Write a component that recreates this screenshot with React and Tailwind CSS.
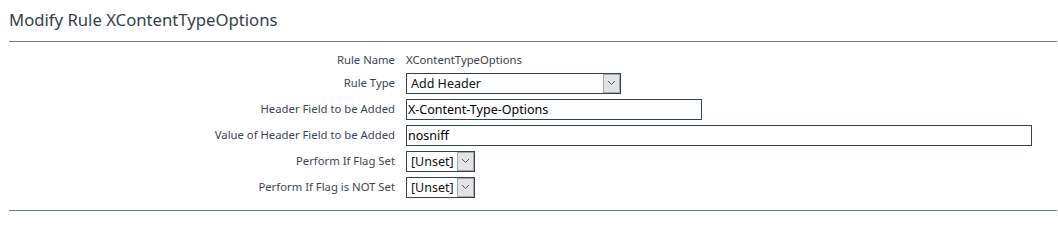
import React from 'react'

const Chevron = () => (
  <svg width="9" height="6" viewBox="0 0 9 6" fill="none">
    <path d="M1 1l3.5 3.5L8 1" stroke="#555" strokeWidth="1" />
  </svg>
)

const FakeSelect = ({ value, width }) => (
  <div className={`flex h-[21px] border border-[#2f4256] bg-white ${width}`}>
    <div className="flex-1 pl-[4px] text-[12.5px] leading-[19px] text-[#111] whitespace-nowrap overflow-hidden">{value}</div>
    <div className="flex w-[17px] items-center justify-center border border-[#a9a9a9] bg-[#e3e3e3]">
      <Chevron />
    </div>
  </div>
)

const TextBox = ({ value, width }) => (
  <div className={`h-[21px] border border-[#2f4256] bg-white pl-[1px] text-[12.5px] leading-[19px] text-black ${width}`}>
    {value}
  </div>
)

const Row = ({ label, children, height = 'h-[26px]' }) => (
  <div className={`flex items-center ${height}`}>
    <div className="w-[386px] text-right text-[11.3px] text-[#3c4652]">{label}</div>
    <div className="ml-[11px] flex items-center">{children}</div>
  </div>
)

export default function App() {
  return (
    <div className="min-h-screen bg-white pl-[9px] pr-[1px] font-['Noto_Sans',sans-serif]">
      <div className="pt-[8px] pb-[9px] text-[16.7px] leading-[24px] text-[#34404e]">Modify Rule XContentTypeOptions</div>
      <div className="h-[1px] bg-[#66798a]" />

      <div className="mt-[8px]">
        <Row label="Rule Name" height="h-[20px]">
          <span className="text-[11.3px] text-[#3a3f45]">XContentTypeOptions</span>
        </Row>
        <Row label="Rule Type">
          <FakeSelect value="Add Header" width="w-[215px]" />
        </Row>
        <Row label="Header Field to be Added">
          <TextBox value="X-Content-Type-Options" width="w-[296px]" />
        </Row>
        <Row label="Value of Header Field to be Added">
          <TextBox value="nosniff" width="w-[626px]" />
        </Row>
        <Row label="Perform If Flag Set">
          <FakeSelect value="[Unset]" width="w-[69px]" />
        </Row>
        <Row label="Perform If Flag is NOT Set">
          <FakeSelect value="[Unset]" width="w-[69px]" />
        </Row>
      </div>

      <div className="mt-[10px] h-[1px] bg-[#5b7f9d]" />
    </div>
  )
}
